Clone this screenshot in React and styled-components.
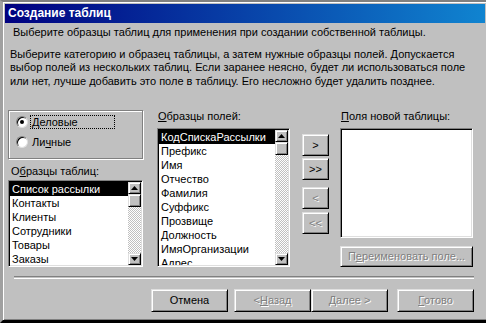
import styled, { createGlobalStyle } from "styled-components";

const GlobalStyle = createGlobalStyle`
  html, body {
    margin: 0;
    padding: 0;
    background: #c0c0c0;
  }
  body {
    font-family: "Liberation Sans", Arial, sans-serif;
    font-size: 11px;
    color: #000;
  }
`;

// Window frame
const Window = styled.div`
  box-sizing: border-box;
  width: 486px;
  height: 323px;
  background: #c0c0c0;
  border-top: 2px solid #808080;
  border-left: 3px solid #a0a0a0;
  border-bottom: 3px solid #000;
  box-shadow: inset 1px 1px 0 #fff, inset 0 -1px 0 #808080;
  padding: 2px 0 0 2px;
  display: flex;
  flex-direction: column;
  overflow: hidden;
`;

const TitleBar = styled.div`
  height: 19px;
  margin-right: 1px;
  padding-left: 3px;
  background: linear-gradient(to right, #000080, #1084d0);
  color: #fff;
  font-size: 12px;
  font-weight: bold;
  line-height: 19px;
  white-space: nowrap;
`;

const Subtitle = styled.div`
  margin-top: 3px;
  padding-left: 8px;
  line-height: 13px;
  white-space: nowrap;
`;

const Intro = styled.div`
  margin-top: 9px;
  padding-left: 5px;
  line-height: 13.33px;
`;

const Line = styled.div`
  white-space: nowrap;
`;

// Main area
const Main = styled.div`
  margin-top: 22px;
  padding-left: 3px;
  height: 157px;
  display: flex;
  align-items: stretch;
`;

const Column = styled.div`
  width: ${(p) => p.$w}px;
  margin-left: ${(p) => p.$ml || 0}px;
  display: flex;
  flex-direction: column;
`;

const GroupBox = styled.div`
  box-sizing: border-box;
  height: 49px;
  width: 135px;
  border: 1px solid #808080;
  box-shadow: inset 1px 1px 0 #fff, 1px 1px 0 #fff;
  padding: 4px 0 0 7px;
  display: flex;
  flex-direction: column;
  gap: 6px;
`;

const RadioRow = styled.div`
  height: 14px;
  display: flex;
  align-items: center;
`;

const RadioCircle = styled.span`
  box-sizing: border-box;
  width: 12px;
  height: 12px;
  border-radius: 50%;
  background: #fff;
  border: 1px solid;
  border-color: #808080 #dfdfdf #dfdfdf #808080;
  box-shadow: inset 1px 1px 0 #000;
  display: flex;
  align-items: center;
  justify-content: center;

  &::after {
    content: "";
    width: 4px;
    height: 4px;
    border-radius: 50%;
    background: ${(p) => (p.$checked ? "#000" : "transparent")};
  }
`;

const RadioLabel = styled.span`
  margin-left: 2px;
  height: 14px;
  line-height: 13px;
  padding: 0 2px 0 1px;
  width: ${(p) => (p.$focused ? "85px" : "auto")};
  box-sizing: border-box;
  border: 1px dotted ${(p) => (p.$focused ? "#000" : "transparent")};
`;

const FieldLabel = styled.div`
  margin-top: ${(p) => p.$mt || 0}px;
  padding-left: ${(p) => p.$pl || 0}px;
  line-height: 13px;
  white-space: nowrap;
`;

const ListBox = styled.div`
  box-sizing: border-box;
  height: ${(p) => p.$h}px;
  margin-top: ${(p) => p.$mt || 0}px;
  background: #fff;
  border: 1px solid;
  border-color: #808080 #fff #fff #808080;
  box-shadow: inset 1px 1px 0 #000, inset -1px -1px 0 #dfdfdf;
  padding: 1px;
  display: flex;
  overflow: hidden;
`;

const Items = styled.div`
  flex: 1;
  overflow: hidden;
`;

const Item = styled.div`
  height: 14px;
  line-height: 14px;
  padding-left: 2px;
  white-space: nowrap;
  background: ${(p) => (p.$selected ? "#000" : "transparent")};
  color: ${(p) => (p.$selected ? "#fff" : "#000")};
`;

const ScrollBar = styled.div`
  width: 13px;
  display: flex;
  flex-direction: column;
`;

const Raised = styled.div`
  box-sizing: border-box;
  background: #c0c0c0;
  border: 1px solid;
  border-color: #dfdfdf #000 #000 #dfdfdf;
  box-shadow: inset 1px 1px 0 #fff, inset -1px -1px 0 #808080;
`;

const ScrollButton = styled(Raised)`
  height: 12px;
  display: flex;
  align-items: center;
  justify-content: center;
`;

const Thumb = styled(Raised)`
  height: 13px;
`;

const Track = styled.div`
  flex: 1;
  background: repeating-conic-gradient(#c0c0c0 0 25%, #fff 0 50%) 0 0 / 2px 2px;
`;

const ButtonColumn = styled.div`
  width: 27px;
  margin-left: 12px;
  padding-top: 24px;
  display: flex;
  flex-direction: column;
`;

const PushButton = styled(Raised)`
  display: flex;
  align-items: center;
  justify-content: center;
  white-space: nowrap;
  color: ${(p) => (p.$disabled ? "#808080" : "#000")};
  text-shadow: ${(p) => (p.$disabled ? "1px 1px 0 #fff" : "none")};
`;

const MoveButton = styled(PushButton)`
  height: 22px;
  margin-top: ${(p) => p.$mt || 0}px;
`;

const RenameButton = styled(PushButton)`
  height: 21px;
  margin-top: 8px;
`;

const Separator = styled.div`
  margin: 9px 12px 0 9px;
  height: 1px;
  border-top: 1px solid #808080;
  border-bottom: 1px solid #fff;
`;

const Footer = styled.div`
  margin-top: 10px;
  padding-right: 12px;
  display: flex;
  justify-content: flex-end;
`;

const WizardButton = styled(PushButton)`
  width: 77px;
  height: 23px;
  margin-left: ${(p) => p.$ml || 0}px;
`;

function Arrow({ down }) {
  return (
    <svg width="7" height="4" viewBox="0 0 7 4">
      <path d={down ? "M0 0h7L3.5 4z" : "M3.5 0L7 4H0z"} fill="#000" />
    </svg>
  );
}

function ListScroll() {
  return (
    <ScrollBar>
      <ScrollButton>
        <Arrow />
      </ScrollButton>
      <Thumb />
      <Track />
      <ScrollButton>
        <Arrow down />
      </ScrollButton>
    </ScrollBar>
  );
}

const tables = ["Список рассылки", "Контакты", "Клиенты", "Сотрудники", "Товары", "Заказы"];

const fields = [
  "КодСпискаРассылки",
  "Префикс",
  "Имя",
  "Отчество",
  "Фамилия",
  "Суффикс",
  "Прозвище",
  "Должность",
  "ИмяОрганизации",
  "Адрес",
];

export default function App() {
  return (
    <>
      <GlobalStyle />
      <Window>
        <TitleBar>Создание таблиц</TitleBar>
        <Subtitle>
          Выберите образцы таблиц для применения при создании собственной таблицы.
        </Subtitle>
        <Intro>
          <Line>
            Выберите категорию и образец таблицы, а затем нужные образцы полей. Допускается
          </Line>
          <Line>
            выбор полей из нескольких таблиц. Если заранее неясно, будет ли использоваться поле
          </Line>
          <Line>или нет, лучше добавить это поле в таблицу. Его несложно будет удалить позднее.</Line>
        </Intro>

        <Main>
          <Column $w={135}>
            <GroupBox>
              <RadioRow>
                <RadioCircle $checked />
                <RadioLabel $focused>
                  <u>Д</u>еловые
                </RadioLabel>
              </RadioRow>
              <RadioRow>
                <RadioCircle />
                <RadioLabel>
                  Ли<u>ч</u>ные
                </RadioLabel>
              </RadioRow>
            </GroupBox>
            <FieldLabel $mt={6} $pl={3}>
              О<u>б</u>разцы таблиц:
            </FieldLabel>
            <ListBox $h={87} $mt={2}>
              <Items>
                {tables.map((t, i) => (
                  <Item key={t} $selected={i === 0}>
                    {t}
                  </Item>
                ))}
              </Items>
              <ListScroll />
            </ListBox>
          </Column>

          <Column $w={133} $ml={14}>
            <FieldLabel $pl={1}>
              <u>О</u>бразцы полей:
            </FieldLabel>
            <ListBox $h={139} $mt={5}>
              <Items>
                {fields.map((f, i) => (
                  <Item key={f} $selected={i === 0}>
                    {f}
                  </Item>
                ))}
              </Items>
              <ListScroll />
            </ListBox>
          </Column>

          <ButtonColumn>
            <MoveButton>&gt;</MoveButton>
            <MoveButton $mt={2}>&gt;&gt;</MoveButton>
            <MoveButton $mt={7} $disabled>
              &lt;
            </MoveButton>
            <MoveButton $mt={3} $disabled>
              &lt;&lt;
            </MoveButton>
          </ButtonColumn>

          <Column $w={133} $ml={11}>
            <FieldLabel $pl={1}>
              <u>П</u>оля новой таблицы:
            </FieldLabel>
            <ListBox $h={110} $mt={5}>
              <Items />
            </ListBox>
            <RenameButton $disabled>
              П<u>е</u>реименовать поле...
            </RenameButton>
          </Column>
        </Main>

        <Separator />

        <Footer>
          <WizardButton>Отмена</WizardButton>
          <WizardButton $ml={6} $disabled>
            &lt; <u>Н</u>азад
          </WizardButton>
          <WizardButton $disabled>
            <u>Д</u>алее &gt;
          </WizardButton>
          <WizardButton $ml={9} $disabled>
            <u>Г</u>отово
          </WizardButton>
        </Footer>
      </Window>
    </>
  );
}
